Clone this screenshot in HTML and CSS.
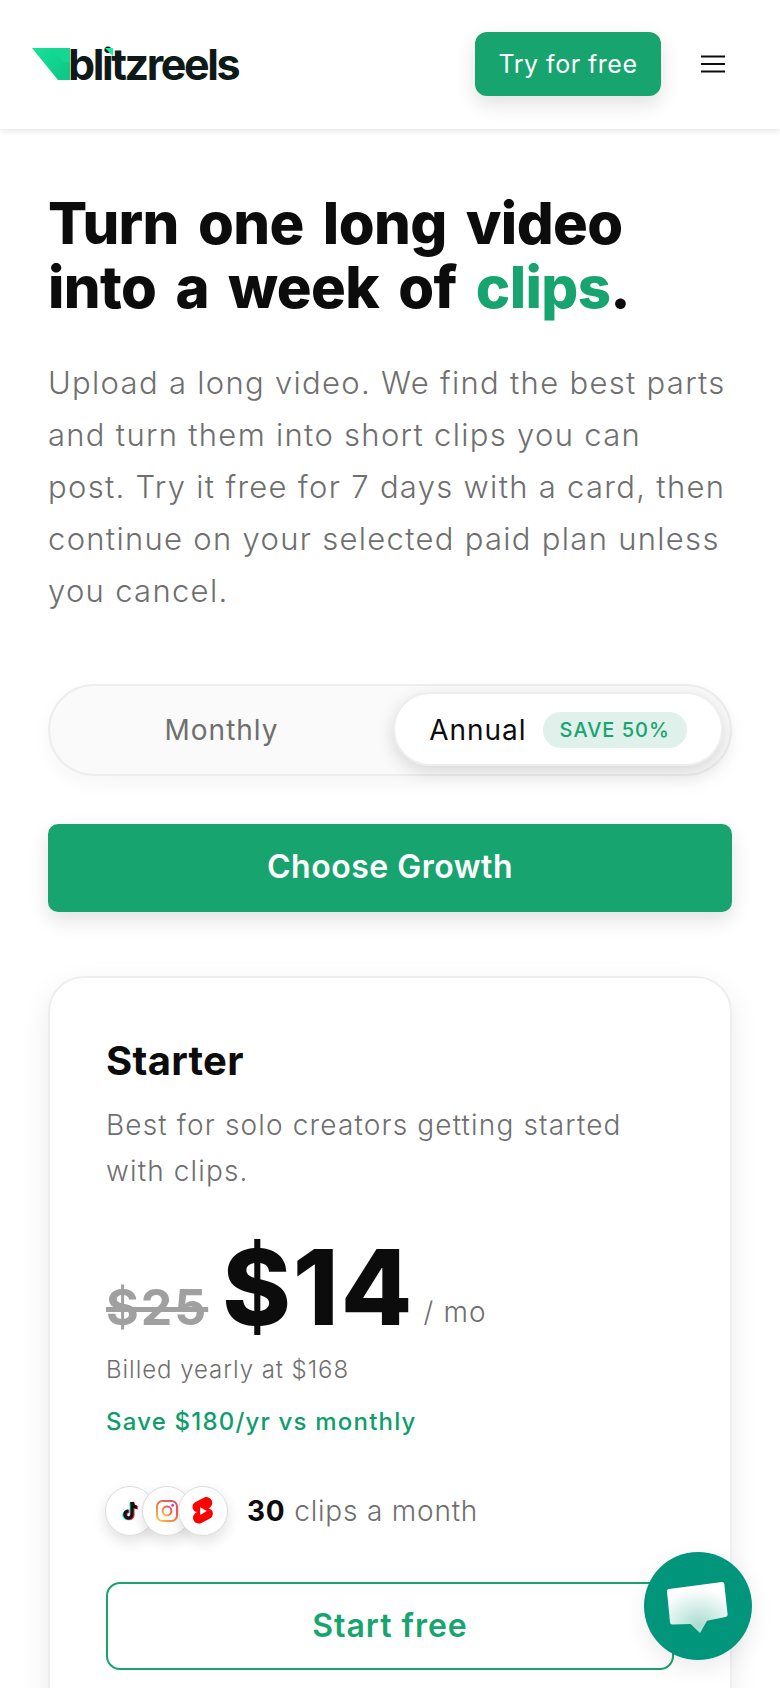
FILE: index.html
```html
<!DOCTYPE html>
<html lang="en">
<head>
<meta charset="utf-8">
<title>Blitzreels pricing</title>
<link rel="stylesheet" href="styles.css">
</head>
<body>
<header class="topbar">
  <a class="logo" href="#">
    <svg class="logo-mark" viewBox="0 0 56 32" width="56" height="32" aria-hidden="true">
      <defs>
        <linearGradient id="lg" x1="0" y1="0" x2="1" y2="0.6">
          <stop offset="0" stop-color="#17e29b"/>
          <stop offset="1" stop-color="#0fc988"/>
        </linearGradient>
      </defs>
      <polygon points="0,0 38,0 38,32 26,32" fill="url(#lg)"/>
      <polygon points="18,0 32,14 38,14 38,0" fill="#16d693"/>
    </svg>
    <span class="logo-text">blitzreels</span>
    <svg class="logo-spark" viewBox="0 0 8 8" width="8" height="8" aria-hidden="true">
      <polygon points="0,0 8,0 8,8" fill="#17f0a8"/>
    </svg>
  </a>
  <div class="top-actions">
    <a class="try-btn" href="#">Try for free</a>
    <svg class="burger" viewBox="0 0 24 18" width="24" height="18" aria-hidden="true">
      <path d="M0 1.5H24M0 9H24M0 16.5H24" stroke="#0c0c0c" stroke-width="2.2"/>
    </svg>
  </div>
</header>
<main class="page">
  <h1 class="headline">Turn one long video into a week of <span class="accent">clips</span>.</h1>
  <p class="lede">Upload a long video. We find the best parts and turn them into short clips you can<br>post. Try it free for 7 days with a card, then continue on your selected paid plan unless you cancel.</p>
  <div class="toggle">
    <div class="toggle-opt">Monthly</div>
    <div class="toggle-opt active">Annual <span class="save">SAVE 50%</span></div>
  </div>
  <a class="choose" href="#">Choose Growth</a>
  <section class="card">
    <h2 class="plan">Starter</h2>
    <p class="plan-desc">Best for solo creators getting started with clips.</p>
    <div class="price-row">
      <span class="old-price">$25</span>
      <span class="price">$14</span>
      <span class="per">/ mo</span>
    </div>
    <p class="billed">Billed yearly at $168</p>
    <p class="saving">Save $180/yr vs monthly</p>
    <div class="clips">
      <div class="socials">
        <span class="social">
          <svg viewBox="0 0 24 24" width="24" height="24" aria-hidden="true">
            <path d="M14 3v12.4a3.6 3.6 0 1 1-3.6-3.6" fill="none" stroke="#25f4ee" stroke-width="3.2" transform="translate(-1 .6)"/>
            <path d="M14 3c.3 3 2.2 5 5 5.2" fill="none" stroke="#25f4ee" stroke-width="3.2" transform="translate(-1 .6)"/>
            <path d="M14 3v12.4a3.6 3.6 0 1 1-3.6-3.6" fill="none" stroke="#fe2c55" stroke-width="3.2" transform="translate(1 .6)"/>
            <path d="M14 3c.3 3 2.2 5 5 5.2" fill="none" stroke="#fe2c55" stroke-width="3.2" transform="translate(1 .6)"/>
            <path d="M14 3v12.4a3.6 3.6 0 1 1-3.6-3.6" fill="none" stroke="#111" stroke-width="3.2"/>
            <path d="M14 3c.3 3 2.2 5 5 5.2" fill="none" stroke="#111" stroke-width="3.2"/>
          </svg>
        </span>
        <span class="social">
          <svg viewBox="0 0 24 24" width="24" height="24" aria-hidden="true">
            <defs>
              <linearGradient id="ig" x1="0.1" y1="1" x2="0.9" y2="0">
                <stop offset="0" stop-color="#fdc04f"/>
                <stop offset="0.5" stop-color="#f6703b"/>
                <stop offset="1" stop-color="#e0507c"/>
              </linearGradient>
            </defs>
            <rect x="2" y="2" width="20" height="20" rx="5.5" fill="none" stroke="url(#ig)" stroke-width="2"/>
            <circle cx="12" cy="12" r="4.4" fill="none" stroke="url(#ig)" stroke-width="2"/>
            <circle cx="17.6" cy="6.4" r="1.3" fill="#c9368f"/>
          </svg>
        </span>
        <span class="social">
          <svg viewBox="0 0 24 24" width="28" height="28" aria-hidden="true">
            <path d="M17.8 1.6c2.7 1.2 3.6 4.2 2.6 6.6-.4 1-1.2 1.9-2.1 2.5l-.9.5c1.5.2 2.8 1.1 3.5 2.6 1 2.4 0 5.2-2.2 6.5l-7.7 4c-2.6 1.2-5.6.2-6.9-2.4-1.2-2.5-.3-5.4 2-6.8l1-.6c-1.6-.2-3-1.2-3.6-2.7-1-2.4 0-5.2 2.3-6.4l8-3.9c1.3-.5 2.8-.5 4 .1z" fill="#ff0000" transform="translate(0 -1) scale(.96)"/>
            <path d="M9.6 8.7v6.7l5.7-3.3z" fill="#fff"/>
          </svg>
        </span>
      </div>
      <p class="clip-count"><strong>30</strong> clips a month</p>
    </div>
    <a class="start" href="#">Start free</a>
  </section>
</main>
<button class="chat" type="button" aria-label="Open chat">
  <svg viewBox="1 -1 62 54" width="62" height="54" aria-hidden="true">
    <defs>
      <radialGradient id="cg" cx="0.52" cy="0.85" r="0.72">
        <stop offset="0" stop-color="#a9dcd0"/>
        <stop offset="1" stop-color="#ffffff"/>
      </radialGradient>
    </defs>
    <path d="M3 9 L56 2 Q58 1.7 58.3 4 L61.6 34.5 Q61.8 36.7 59.5 37 L41 40.7 L34 53 L24.6 44 L6.5 44.6 Q4.2 44.8 4 42.5 L1 11.5 Q.8 9.3 3 9Z" fill="url(#cg)"/>
  </svg>
</button>
</body>
</html>
```
FILE: styles.css
```css
* { box-sizing: border-box; }
html, body { margin: 0; padding: 0; height: 1688px; overflow: hidden; background: #fff; }
body { font-family: Inter, sans-serif; color: #0c0c0c; }
a { text-decoration: none; color: inherit; }
p, h1, h2 { margin: 0; }

.topbar { height: 129px; padding: 0 55px 0 32px; display: flex; align-items: center; justify-content: space-between; background: #fff; box-shadow: 0 2px 6px rgba(0,0,0,.1); position: relative; }
.logo { display: flex; align-items: center; height: 32px; position: relative; margin-top: -1px; }
.logo-mark { flex: none; margin-right: -20px; }
.logo-text { font-weight: 700; font-size: 43px; line-height: 32px; letter-spacing: -2.4px; color: #0d1a18; position: relative; }
.logo-spark { position: absolute; left: 73px; top: 0; }
.top-actions { display: flex; align-items: center; gap: 40px; margin-top: -1px; }
.try-btn { width: 186px; height: 64px; display: flex; align-items: center; justify-content: center; border-radius: 12px; background: #17a46f; color: #fff; font-size: 25px; letter-spacing: .5px; box-shadow: 0 8px 20px rgba(0,0,0,.12); }
.burger { display: block; }

.page { padding: 62px 48px 0; height: 1559px; overflow: hidden; }
.headline { font-weight: 800; font-size: 58px; line-height: 64px; letter-spacing: -.6px; word-spacing: 7px; color: #0c0c0c; }
.accent { color: #17a46f; }
.lede { margin-top: 38px; font-size: 31px; line-height: 52px; letter-spacing: 1.3px; color: #6f6f6f; font-weight: 300; }

.toggle { margin-top: 67px; height: 92px; border: 2px solid #eeeeee; border-radius: 46px; background: #fafafa; padding: 6px 7px 8px 8px; display: flex; align-items: stretch; box-shadow: 0 8px 20px rgba(0,0,0,.04); }
.toggle-opt { display: flex; align-items: center; justify-content: center; gap: 16px; border-radius: 38px; padding-top: 2px; font-size: 28px; letter-spacing: 1px; flex: 1; color: #6f6f6f; margin-right: 8px; }
.toggle-opt.active { flex: none; width: 330px; margin-right: 0; background: #fff; color: #0c0c0c; box-shadow: 0 6px 18px rgba(0,0,0,.14); border: 2px solid #eeeeee; }
.save { display: inline-block; padding: 0 17px; height: 36px; line-height: 36px; border-radius: 18px; background: #dff1ea; color: #17a46f; font-size: 20px; letter-spacing: 1px; font-weight: 500; }

.choose { margin-top: 48px; height: 88px; padding-bottom: 3px; display: flex; align-items: center; justify-content: center; border-radius: 10px; background: #17a46f; color: #fff; font-size: 32px; font-weight: 600; letter-spacing: .5px; box-shadow: 0 8px 20px rgba(0,0,0,.12); }

.card { margin-top: 64px; height: 800px; border: 2px solid #eeeeee; border-radius: 36px; padding: 59px 56px; background: #fff; box-shadow: 0 10px 30px rgba(0,0,0,.08); }
.plan { font-size: 40px; line-height: 48px; font-weight: 700; letter-spacing: .3px; color: #0c0c0c; }
.plan-desc { margin-top: 17px; font-size: 28px; line-height: 46px; letter-spacing: 1.15px; color: #6f6f6f; font-weight: 300; }
.price-row { margin-top: 33px; display: flex; align-items: baseline; }
.old-price { font-weight: 700; font-size: 50px; letter-spacing: 2px; color: #a0a0a0; text-decoration: line-through; }
.price { margin-left: 14px; font-weight: 800; font-size: 104px; line-height: 120px; letter-spacing: 2px; color: #0c0c0c; }
.per { margin-left: 9px; font-size: 28px; letter-spacing: 1.2px; color: #6f6f6f; font-weight: 300; transform: translateY(-3px); }
.billed { margin-top: 5px; font-size: 24px; line-height: 36px; letter-spacing: .95px; color: #6f6f6f; font-weight: 300; }
.saving { margin-top: 16px; font-size: 24px; line-height: 36px; letter-spacing: 1.2px; font-weight: 500; color: #0f9d6b; }
.clips { margin-top: 46px; display: flex; align-items: center; gap: 19px; }
.socials { display: flex; margin-left: -1px; }
.social { width: 50px; height: 50px; border-radius: 50%; background: #fff; border: 1.5px solid #dddddd; display: flex; align-items: center; justify-content: center; box-shadow: 0 6px 14px rgba(0,0,0,.12); margin-right: -13.5px; }
.social:last-child { margin-right: 0; }
.clip-count { font-size: 28px; letter-spacing: .8px; color: #6f6f6f; font-weight: 300; }
.clip-count strong { font-weight: 700; color: #0c0c0c; }
.start { margin-top: 46px; height: 88px; padding-bottom: 2px; display: flex; align-items: center; justify-content: center; border: 2px solid #17a46f; border-radius: 14px; color: #17a46f; font-size: 32px; font-weight: 600; letter-spacing: 1px; background: #fff; }

.chat { position: fixed; left: 644px; top: 1552px; width: 108px; height: 108px; padding: 0; border: 0; border-radius: 50%; background: #01957c; display: flex; align-items: center; justify-content: center; box-shadow: 0 8px 24px rgba(0,0,0,.08); }
```
